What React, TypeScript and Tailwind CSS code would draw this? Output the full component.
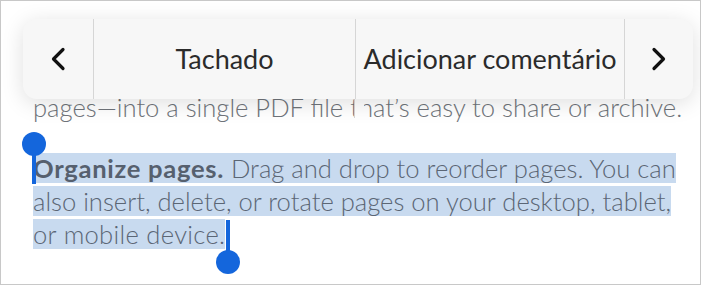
import React from 'react';

function Chevron({ dir }: { dir: 'left' | 'right' }) {
    return (
        <svg width="16" height="24" viewBox="0 0 16 24" fill="none">
            <path
                d={dir === 'left' ? 'M13 2.5 L3.5 12 L13 21.5' : 'M3 2.5 L12.5 12 L3 21.5'}
                stroke="#111"
                strokeWidth="3.2"
                strokeLinecap="round"
                strokeLinejoin="round"
            />
        </svg>
    );
}

export default function App() {
    return (
        <div
            className="relative w-[701px] h-[285px] overflow-hidden border border-[#c8c8c8] bg-white"
            style={{ fontFamily: 'Lato, "Open Sans", sans-serif' }}
        >
            {/* Document text */}
            <div className="pl-[32px] pr-4 pt-[90px] text-[25.6px] leading-[33px] text-[#6f747a] font-light">
                <p className="whitespace-nowrap">pages—into a single PDF file that’s easy to share or archive.</p>
                <p className="mt-[28px] text-[#5b6675] whitespace-nowrap">
                    <span className="bg-[#c8daef]">
                        <span className="font-bold text-[#56606e] tracking-[0.7px]">Organize pages.</span> Drag and drop to reorder pages. You can
                    </span>
                    <br />
                    <span className="bg-[#c8daef]">also insert, delete, or rotate pages on your desktop, tablet,</span>
                    <br />
                    <span className="bg-[#c8daef] tracking-[0.3px]">or mobile device.</span>
                </p>
            </div>

            {/* Selection handles */}
            <div className="absolute left-[21px] top-[131px] flex flex-col items-center">
                <div className="w-[24px] h-[24px] rounded-full bg-[#1466dc]" />
                <div className="w-[4px] h-[30px] -mt-[2px] bg-[#1466dc]" />
            </div>
            <div className="absolute left-[215px] top-[219px] flex flex-col items-center">
                <div className="w-[4px] h-[34px] bg-[#1466dc]" />
                <div className="w-[24px] h-[24px] -mt-[4px] rounded-full bg-[#1466dc]" />
            </div>

            {/* Pointer under middle divider */}
            <div className="absolute left-[353px] top-[96px] w-[10px] h-[21px] bg-white border-l border-[#d6d6d6]" />

            {/* Context toolbar */}
            <div className="absolute left-[22px] top-[18px] w-[670px] h-[80px] flex rounded-[14px] bg-[#f7f7f7] shadow-[0_4px_22px_rgba(0,0,0,0.13)] text-[27px] text-[#2b2b2b]">
                <div className="w-[71px] flex items-center justify-center border-r border-[#d6d6d6]">
                    <Chevron dir="left" />
                </div>
                <div className="w-[262px] flex items-center justify-center border-r border-[#d6d6d6]">Tachado</div>
                <div className="w-[269px] flex items-center justify-center border-r border-[#d6d6d6] whitespace-nowrap">
                    Adicionar comentário
                </div>
                <div className="flex-1 flex items-center justify-center">
                    <Chevron dir="right" />
                </div>
            </div>
        </div>
    );
}
